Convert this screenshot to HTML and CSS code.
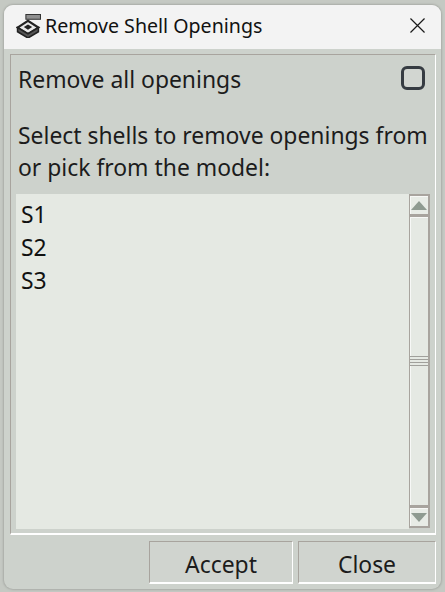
FILE: index.html
```html
<!DOCTYPE html>
<html lang="en">
<head>
<meta charset="utf-8">
<title>Remove Shell Openings</title>
<link rel="stylesheet" href="styles.css">
</head>
<body>
<div class="window">
  <header class="titlebar">
    <svg class="app-icon" viewBox="0 0 24 24" width="25" height="25" aria-hidden="true">
      <path d="M9.500 1.500h14v4.500h-14z" fill="#8f8f8f" stroke="#333" stroke-width="1"/>
      <path d="M1.500 14 L11.500 7.500 L21.500 14 L11.500 20 Z" fill="#e8e8e8" stroke="#222" stroke-width="2"/>
      <path d="M7.500 13.500 L11.500 11 L15.500 13.500 L11.500 16 Z" fill="#222"/>
      <path d="M1.500 14 V18 L11.500 24 L21.500 18 V14 L11.500 20 Z" fill="#555" stroke="#222" stroke-width="1.500"/>
    </svg>
    <span class="title">Remove Shell Openings</span>
    <svg class="close-x" viewBox="0 0 16 16" width="15" height="15" aria-hidden="true">
      <path d="M0.500 0.500 L15.500 15.500 M15.500 0.500 L0.500 15.500" stroke="#1a1a1a" stroke-width="1.300" fill="none"/>
    </svg>
  </header>
  <main class="body">
    <section class="panel">
      <div class="option-row">
        <span class="label">Remove all openings</span>
        <span class="checkbox"></span>
      </div>
      <p class="prompt">Select shells to remove openings from<br>or pick from the model:</p>
      <div class="list-wrap">
        <ul class="list">
          <li>S1</li>
          <li>S2</li>
          <li>S3</li>
        </ul>
        <div class="scrollbar">
          <div class="sb-btn"><span class="arrow-up"></span></div>
          <div class="sb-thumb"><span class="grip"></span></div>
          <div class="sb-btn"><span class="arrow-down"></span></div>
        </div>
      </div>
    </section>
    <footer class="actions">
      <button class="btn btn-accept" type="button">Accept</button>
      <button class="btn btn-close" type="button">Close</button>
    </footer>
  </main>
</div>
</body>
</html>
```

FILE: styles.css
```css
* { box-sizing: border-box; }
html, body { margin: 0; height: 100%; }
body {
  width: 445px;
  height: 592px;
  overflow: hidden;
  background: #c5c9c3;
  padding: 5px 4px 3px 4px;
  font-family: "Noto Sans", "Open Sans", sans-serif;
  color: #1c1c1c;
}
.window {
  height: 584px;
  display: flex;
  flex-direction: column;
  border-radius: 9px;
  overflow: hidden;
  background: #cdd2cc;
  box-shadow: 0 0 2px 1px #a9aca7;
}
.titlebar {
  height: 44px;
  flex: none;
  display: flex;
  align-items: center;
  background: #f3f3f3;
  padding: 0 16px 3px 12px;
}
.app-icon { flex: none; margin-right: 4px; }
.title { flex: 1; font-size: 19.600px; color: #111; white-space: nowrap; }
.close-x { flex: none; }
.body {
  flex: 1;
  min-height: 0;
  display: flex;
  flex-direction: column;
  padding: 5px 5px 5px 6px;
}
.panel {
  height: 481px;
  flex: none;
  display: flex;
  flex-direction: column;
  border-top: 1px solid #a8a49e;
  border-left: 1px solid #a8a49e;
  border-right: 1px solid #fff;
  border-bottom: 2px solid #fff;
  padding: 0 5px 4px 5px;
}
.option-row {
  height: 50px;
  flex: none;
  display: flex;
  align-items: flex-start;
  justify-content: space-between;
  padding: 9px 5px 0 2px;
}
.label { font-size: 22.900px; line-height: 32px; }
.checkbox {
  width: 24px;
  height: 24px;
  margin-top: 2px;
  border: 3px solid #363c42;
  border-radius: 6px;
  background: #d2d6d1;
}
.prompt {
  margin: 0;
  padding-left: 2px;
  height: 89px;
  flex: none;
  padding-top: 15px;
  font-size: 22.900px;
  line-height: 32px;
  white-space: nowrap;
}
.list-wrap {
  flex: 1;
  min-height: 0;
  display: flex;
}
.list {
  flex: 1;
  margin: 0;
  padding: 4px 0 0 5px;
  list-style: none;
  background: #e5e9e3;
  font-size: 22.900px;
  line-height: 33px;
  color: #111;
}
.scrollbar {
  width: 21px;
  flex: none;
  display: flex;
  flex-direction: column;
  background: #a8a49e;
  margin-bottom: 1px;
}
.sb-btn {
  height: 22px;
  flex: none;
  display: flex;
  align-items: center;
  justify-content: center;
  background: #e8ece6;
  border: 2px solid #a8a49e;
  border-left-width: 1px;
  box-shadow: inset 1px 1px 0 #f7f8f6;
}
.sb-thumb {
  flex: 1;
  display: flex;
  align-items: center;
  justify-content: center;
  background: #e5e9e3;
  border: 1px solid #a8a49e;
  border-right-width: 2px;
  box-shadow: inset 1px 1px 0 #f7f8f6;
}
.grip {
  width: 100%;
  height: 10px;
  background: repeating-linear-gradient(to bottom, #a0a09b 0, #a0a09b 1.330px, #e5e9e3 1.330px, #e5e9e3 3px);
}
.arrow-up, .arrow-down {
  width: 0;
  height: 0;
  border-left: 8px solid transparent;
  border-right: 8px solid transparent;
}
.arrow-up { border-bottom: 9px solid #8f9b91; }
.arrow-down { border-top: 9px solid #8f9b91; }
.actions {
  flex: 1;
  display: flex;
  justify-content: flex-end;
  gap: 5px;
  padding-top: 6px;
  padding-bottom: 0;
}
.btn {
  height: 43px;
  padding: 5px 0 0;
  background: #d0d4cf;
  border-style: solid;
  border-width: 1px 1px 2px 1px;
  border-color: #a8a49e #fff #fff #a8a49e;
  font: inherit;
  font-size: 22.900px;
  color: #1c1c1c;
}
.btn-accept { width: 144px; }
.btn-close { width: 138px; }
```
